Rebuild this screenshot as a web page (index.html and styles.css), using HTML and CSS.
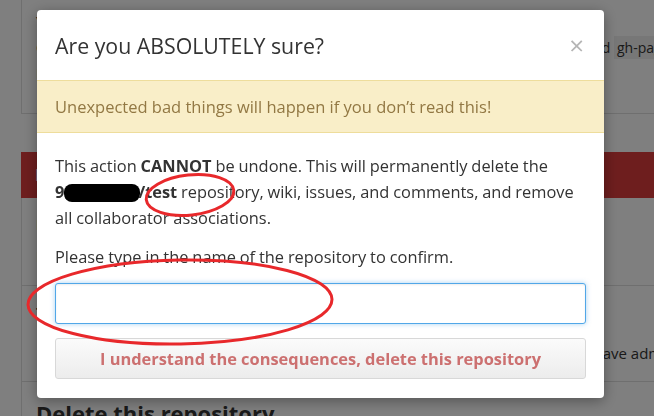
FILE: index.html
```html
<!DOCTYPE html>
<html lang="en">
<head>
    <meta charset="UTF-8">
    <meta name="viewport" content="width=device-width, initial-scale=1.0">
    <title>Delete repository</title>
    <link rel="stylesheet" href="styles.css">
</head>
<body>
    <!-- settings page behind the dialog -->
    <div class="page">
        <div class="box box-top">
            <p>Your site is published from the branch you choose.</p>
            <p class="pages-note">GitHub Pages is designed to host your personal organization pages from the master and <code>gh-pages</code> branches</p>
            <p>Learn more about custom domains.</p>
        </div>

        <div class="danger-head">Danger Zone</div>
        <div class="box danger-box">
            <div class="danger-row">
                <h4>Make this repository private</h4>
                <p>Please upgrade your plan to make this repository private.</p>
            </div>
            <div class="danger-row danger-row-tall">
                <h4>Transfer ownership</h4>
                <p class="transfer-note">Transfer this repository to another user or to an organization where you have admin rights.</p>
            </div>
            <div class="danger-row">
                <h3>Delete this repository</h3>
            </div>
        </div>
    </div>

    <div class="overlay"></div>

    <div class="modal">
        <div class="modal-header">
            <div class="modal-title">Are you ABSOLUTELY sure?</div>
            <div class="modal-close">&times;</div>
        </div>
        <div class="flash-warn">Unexpected bad things will happen if you don’t read this!</div>
        <div class="modal-body">
            <p>This action <strong>CANNOT</strong> be undone. This will permanently delete the
                <strong class="repo-name">9<span class="redacted">xxxxxxx</span>/test</strong> repository, wiki, issues, and comments, and remove all collaborator associations.</p>
            <p>Please type in the name of the repository to confirm.</p>
            <input class="confirm-input" type="text">
            <button class="btn-danger" disabled>I understand the consequences, delete this repository</button>
        </div>
    </div>

    <!-- hand drawn marks on the screenshot -->
    <svg class="marks" width="654" height="416" viewBox="0 0 654 416">
        <ellipse cx="190" cy="195" rx="44" ry="20" transform="rotate(-6 190 195)" />
        <ellipse cx="180" cy="302" rx="152" ry="42" transform="rotate(-1 180 302)" />
    </svg>
</body>
</html>
```

FILE: styles.css
```css
body {
    margin: 0;
    font-family: 'Open Sans', 'Noto Sans', sans-serif;
    background-color: #fff;
    color: #333;
    overflow: hidden;
    height: 416px;
}

.page {
    padding-left: 21px;
    width: 760px;
}

.box {
    border: 1px solid #dedede;
    background-color: #fff;
}

.box-top {
    border-top: none;
    height: 114px;
    padding: 9px 14px 0;
    box-sizing: border-box;
    margin-bottom: 38px;
    font-size: 14px;
}

.box-top p {
    margin: 0;
    line-height: 26px;
}

.pages-note {
    white-space: nowrap;
}

.pages-note code {
    background-color: #eee;
    padding: 2px 3px;
    font-family: 'Open Sans', sans-serif;
}

.danger-head {
    background-color: #dc3d3d;
    color: #fff;
    height: 46px;
    line-height: 46px;
    padding-left: 14px;
    font-weight: bold;
}

.danger-box {
    border-top: none;
    font-size: 15px;
}

.danger-row {
    padding: 16px 14px;
    height: 88px;
    box-sizing: border-box;
    border-bottom: 1px solid #dedede;
}

.danger-row-tall {
    height: 96px;
}

.danger-row h4 {
    margin: 0 0 12px;
    font-size: 15px;
}

.danger-row h3 {
    margin: 0;
    font-size: 22px;
}

.danger-row p {
    margin: 0;
}

.transfer-note {
    white-space: nowrap;
    padding-top: 9px;
    text-indent: 50px;
}

.overlay {
    position: fixed;
    inset: 0;
    background-color: rgba(0, 0, 0, 0.5);
}

.modal {
    position: fixed;
    left: 37px;
    top: 10px;
    width: 567px;
    background-color: #fff;
    border-radius: 4px;
    box-shadow: 0 3px 14px rgba(0, 0, 0, 0.35);
    overflow: hidden;
}

.modal-header {
    display: flex;
    align-items: center;
    justify-content: space-between;
    height: 70px;
    padding: 0 20px 0 18px;
}

.modal-title {
    font-size: 21.3px;
    color: #333;
}

.modal-close {
    font-size: 26px;
    color: #b5b5b5;
    line-height: 1;
}

.flash-warn {
    background-color: #f9eec8;
    border-top: 1px solid #eedd9c;
    border-bottom: 1px solid #eedd9c;
    color: #927844;
    padding: 15px 18px;
    font-size: 16.5px;
    line-height: 21px;
}

.modal-body {
    padding: 20px 18px 19px;
    font-size: 16.4px;
}

.modal-body p {
    margin: 0 0 13px;
    line-height: 26px;
    word-spacing: -0.4px;
}

.repo-name {
    white-space: nowrap;
}

.redacted {
    display: inline-block;
    background-color: #000;
    color: #000;
    border-radius: 8px;
    height: 18px;
    line-height: 18px;
    vertical-align: -4px;
    width: 76px;
    margin-right: -2px;
    overflow: hidden;
}

.confirm-input {
    display: block;
    width: 100%;
    box-sizing: border-box;
    height: 41px;
    border: 1px solid #51a7e8;
    border-radius: 3px;
    box-shadow: inset 0 1px 2px rgba(0, 0, 0, 0.08), 0 0 5px rgba(81, 167, 232, 0.5);
    outline: none;
    margin-bottom: 14px;
}

.btn-danger {
    display: block;
    width: 100%;
    height: 41px;
    border: 1px solid #d8d8d8;
    border-radius: 3px;
    background: linear-gradient(#fbfbfb, #ececec);
    color: #cc7070;
    font-family: 'Open Sans', sans-serif;
    font-weight: bold;
    font-size: 16.4px;
}

.marks {
    position: fixed;
    left: 0;
    top: 0;
    pointer-events: none;
}

.marks ellipse {
    fill: none;
    stroke: #e8282b;
    stroke-width: 3;
}
```
